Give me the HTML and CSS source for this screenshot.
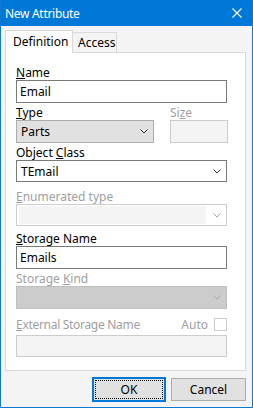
FILE: index.html
```html
<!DOCTYPE html>
<html>
<head>
<meta charset="utf-8">
<link rel="stylesheet" href="styles.css">
</head>
<body>
<div class="window">
  <div class="titlebar">
    <span class="title">New Attribute</span>
    <svg class="close" width="10" height="10" viewBox="0 0 10 10"><path d="M0.5 0.5L9.5 9.5M9.5 0.5L0.5 9.5" stroke="#fff" stroke-width="1.1" fill="none"/></svg>
  </div>
  <div class="client">
    <div class="tabs">
      <div class="tab active">Definition</div>
      <div class="tab">Access</div>
    </div>
    <div class="panel">
      <div class="label l-name"><u>N</u>ame</div>
      <div class="edit">Email</div>

      <div class="row r-type">
        <div class="col col-type">
          <div class="label"><u>T</u>ype</div>
          <div class="combo grey">Parts<svg class="chev" width="8" height="5" viewBox="0 0 8 5"><path d="M0.5 0.5L4 4L7.5 0.5" stroke="#333" fill="none"/></svg></div>
        </div>
        <div class="col col-size">
          <div class="label dis">Si<u>z</u>e</div>
          <div class="edit dis-edit small"></div>
        </div>
      </div>

      <div class="label l-class">Object <u>C</u>lass</div>
      <div class="combo white">TEmail<svg class="chev" width="8" height="5" viewBox="0 0 8 5"><path d="M0.5 0.5L4 4L7.5 0.5" stroke="#333" fill="none"/></svg></div>

      <div class="label dis l-enum"><u>E</u>numerated type</div>
      <div class="combo dis-combo"><span class="dis-field"></span><svg class="chev" width="8" height="5" viewBox="0 0 8 5"><path d="M0.5 0.5L4 4L7.5 0.5" stroke="#a8a8a8" fill="none"/></svg></div>

      <div class="label l-sname"><u>S</u>torage Name</div>
      <div class="edit">Emails</div>

      <div class="label dis l-skind">Storage <u>K</u>ind</div>
      <div class="combo dis-grey"><svg class="chev" width="8" height="5" viewBox="0 0 8 5"><path d="M0.5 0.5L4 4L7.5 0.5" stroke="#a8a8a8" fill="none"/></svg></div>

      <div class="ext-row">
        <div class="label dis ext-label"><u>E</u>xternal Storage Name</div>
        <div class="auto"><span class="label dis">Auto</span><span class="check"></span></div>
      </div>
      <div class="edit dis-edit ext"></div>
    </div>
    <div class="buttons">
      <div class="btn default"><span class="focus">OK</span></div>
      <div class="btn">Cancel</div>
    </div>
  </div>
</div>
</body>
</html>
```
FILE: styles.css
```css
html, body {
  margin: 0;
  padding: 0;
}
body {
  font-family: "Noto Sans", "Open Sans", sans-serif;
  font-size: 12px;
  color: #000;
}
.window {
  width: 253px;
  height: 408px;
  box-sizing: border-box;
  background: #0f7ad6;
  padding: 0 1px 1px 1px;
  display: flex;
  flex-direction: column;
}
.titlebar {
  height: 26px;
  flex: none;
  background: #0078d7;
  color: #fff;
  display: flex;
  align-items: center;
  justify-content: space-between;
  padding: 0 10px 0 4px;
  font-size: 12px;
}
.title {
  letter-spacing: -0.3px;
}
.close {
  display: block;
}
.client {
  flex: 1;
  background: #f4f4f4;
  padding: 4px 6px 0 4px;
  display: flex;
  flex-direction: column;
}
.tabs {
  display: flex;
  align-items: flex-end;
  height: 22px;
  position: relative;
  z-index: 1;
}
.tab {
  box-sizing: border-box;
  height: 20px;
  border: 1px solid #d9d9d9;
  border-bottom: none;
  padding: 0 4px 0 5px;
  line-height: 19px;
  background: #f4f4f4;
}
.tab.active {
  height: 23px;
  background: #fff;
  padding: 0 7px 0 7px;
  line-height: 21px;
  margin-bottom: -1px;
  border-right: 1px solid #d9d9d9;
  width: 68px;
}
.tab:not(.active) {
  border-left: none;
  width: 44px;
}
.panel {
  box-sizing: border-box;
  height: 319px;
  background: #fff;
  border: 1px solid #d9d9d9;
  padding: 12px 0 0 10px;
  width: 241px;
}
.label {
  line-height: 15px;
  height: 15px;
  white-space: nowrap;
}
.label u {
  text-underline-offset: 1px;
}
.dis {
  color: #a0a0a0;
}
.ext-label {
  letter-spacing: -0.3px;
}
.edit, .combo {
  box-sizing: border-box;
  width: 211px;
  height: 23px;
  border: 1px solid #7a7a7a;
  background: #fff;
  padding: 0 3px;
  line-height: 21px;
  position: relative;
}
.l-name { margin-top: 0; }
.row {
  display: flex;
  gap: 16px;
  margin-top: 2px;
}
.col-type .combo {
  width: 138px;
}
.small {
  width: 58px;
}
.combo {
  display: flex;
  align-items: center;
  justify-content: space-between;
  padding: 0 5px 0 4px;
}
.chev {
  display: block;
  margin-right: 0;
}
.grey {
  background: #e1e1e1;
  border-color: #adadad;
}
.white {
  height: 22px;
}
.dis-edit {
  background: #f4f4f4;
  border-color: #cccccc;
}
.l-class { margin-top: 2px; }
.l-enum { margin-top: 7px; }
.dis-combo {
  height: 22px;
  border-color: #cccccc;
  background: #fff;
  padding: 1px 5px 1px 2px;
  align-items: stretch;
}
.dis-field {
  width: 187px;
  background: #f4f4f4;
}
.dis-combo .chev {
  align-self: center;
}
.l-sname { margin-top: 5px; }
.l-skind { margin-top: 2px; }
.dis-grey {
  background: #cccccc;
  border-color: #bfbfbf;
  justify-content: flex-end;
}
.ext-row {
  display: flex;
  justify-content: space-between;
  align-items: center;
  width: 211px;
  margin-top: 8px;
  height: 15px;
}
.auto {
  display: flex;
  align-items: center;
  gap: 6px;
}
.check {
  box-sizing: border-box;
  width: 13px;
  height: 13px;
  border: 1px solid #cccccc;
  background: #fff;
}
.ext {
  height: 22px;
  margin-top: 3px;
}
.buttons {
  display: flex;
  justify-content: flex-end;
  gap: 5px;
  margin-top: 6px;
  padding-right: 0;
}
.btn {
  box-sizing: border-box;
  width: 75px;
  height: 23px;
  border: 1px solid #adadad;
  background: #e1e1e1;
  display: flex;
  align-items: center;
  justify-content: center;
  margin-top: 1px;
}
.btn.default {
  width: 74px;
  height: 25px;
  margin-top: 0;
  border: 2px solid #0078d7;
  padding: 1px;
}
.focus {
  box-sizing: border-box;
  width: 100%;
  height: 100%;
  border: 1px dotted #000;
  display: flex;
  align-items: center;
  justify-content: center;
}
```
